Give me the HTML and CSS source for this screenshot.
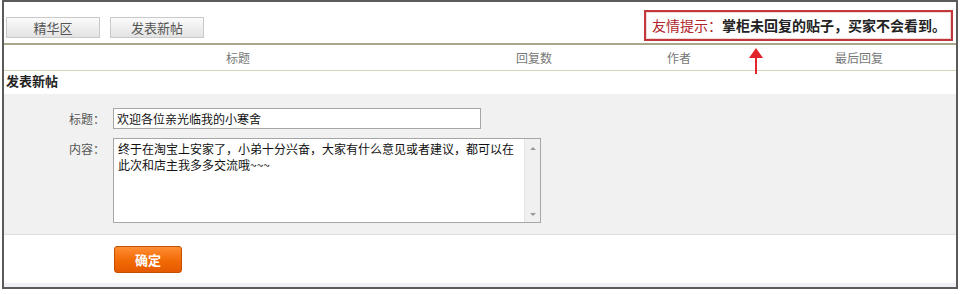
FILE: index.html
```html
<!DOCTYPE html>
<html>
<head>
    <meta charset="utf-8">
    <title>发表新帖</title>
    <link rel="stylesheet" href="styles.css">
</head>
<body>
    <div class="frame">
        <div class="toolbar">
            <button class="tab-btn" type="button">精华区</button>
            <button class="tab-btn" type="button">发表新帖</button>
            <div class="tip"><span class="tip-label">友情提示：</span><b>掌柜未回复的贴子，买家不会看到。</b></div>
        </div>
        <div class="thead">
            <span>标题</span>
            <span>回复数</span>
            <span>作者</span>
            <span>最后回复</span>
        </div>
        <h2 class="section-title">发表新帖</h2>
        <form class="post-form" id="postForm">
            <div class="row">
                <label for="title">标题：</label>
                <input type="text" id="title" class="txt" value="欢迎各位亲光临我的小寒舍">
            </div>
            <div class="row">
                <label for="content">内容：</label>
                <div class="area-box">
                    <textarea id="content" class="area">终于在淘宝上安家了，小弟十分兴奋，大家有什么意见或者建议，都可以在此次和店主我多多交流哦~~~</textarea>
                    <div class="fake-scroll">
                        <span class="arr up"></span>
                        <span class="arr down"></span>
                    </div>
                </div>
            </div>
        </form>
        <div class="actions">
            <button class="submit-btn" type="submit" form="postForm">确定</button>
        </div>
        <div class="strip"></div>

        <!-- flecha roja que apunta al aviso -->
        <svg class="arrow" width="16" height="28" viewBox="0 0 16 28">
            <path d="M8 1 L15 11 L1 11 Z" fill="#e2242b"/>
            <rect x="7" y="10" width="2" height="17" fill="#e2242b"/>
        </svg>
    </div>
</body>
</html>
```

FILE: styles.css
```css
body {
    margin: 0;
    font-family: "Noto Sans CJK SC", "Liberation Sans", sans-serif;
    font-size: 12px;
    color: #333;
    background: #fff;
}
.frame {
    position: relative;
    margin: 0 3px 0 2px;
    border: 2px solid #5b5b5b;
    background: #fff;
}
.toolbar {
    display: flex;
    align-items: flex-end;
    height: 41px;
    padding: 0 2px;
    border-bottom: 2px solid #aaa68a;
}
.tab-btn {
    width: 94px;
    height: 21px;
    margin: 0 10px 5px 0;
    padding: 0;
    border: 1px solid #c9c9c9;
    background: linear-gradient(#fbfbfb, #e3e3e3);
    font-family: inherit;
    font-size: 13px;
    color: #555;
    line-height: 19px;
}
.tip {
    margin: 0 1px 2px auto;
    height: 27px;
    padding: 0 5px 0 6px;
    border: 2px solid #c0383a;
    box-shadow: inset 0 0 0 1px #f3d6d6;
    font-size: 14px;
    line-height: 27px;
    color: #222;
    white-space: nowrap;
}
.tip-label {
    color: #b0262c;
}
.thead {
    display: grid;
    grid-template-columns: 468px 124px 166px 1fr;
    height: 25px;
    line-height: 25px;
    border-bottom: 1px solid #d7d4bd;
    text-align: center;
    color: #777;
}
.section-title {
    margin: 0;
    padding: 0 2px;
    height: 23px;
    line-height: 19px;
    font-size: 13px;
    font-weight: bold;
    color: #222;
}
.post-form {
    padding: 14px 0 11px;
    background: #f1f1f1;
    border-bottom: 1px solid #dedede;
}
.row {
    display: flex;
    align-items: flex-start;
    margin-bottom: 9px;
}
.row:last-child {
    margin-bottom: 0;
}
.row label {
    width: 101px;
    padding-right: 8px;
    text-align: right;
    line-height: 21px;
    color: #555;
}
.txt {
    width: 368px;
    height: 21px;
    box-sizing: border-box;
    margin: 0;
    padding: 0 3px;
    border: 1px solid #a6a6a6;
    background: #fff;
    font-family: inherit;
    font-size: 12px;
    color: #111;
}
.area-box {
    display: flex;
    width: 428px;
    height: 85px;
    box-sizing: border-box;
    border: 1px solid #a6a6a6;
    background: #fff;
}
.area {
    flex: 1;
    margin: 0;
    padding: 2px 4px;
    border: none;
    resize: none;
    overflow: hidden;
    font-family: inherit;
    font-size: 12px;
    line-height: 16px;
    color: #111;
    outline: none;
}
.fake-scroll {
    display: flex;
    flex-direction: column;
    justify-content: space-between;
    align-items: center;
    width: 16px;
    padding: 8px 0 6px;
    box-sizing: border-box;
    background: #f0f0f0;
    border-left: 1px solid #e4e4e4;
}
.arr {
    width: 0;
    height: 0;
    border-left: 3px solid transparent;
    border-right: 3px solid transparent;
}
.arr.up {
    border-bottom: 3px solid #999;
}
.arr.down {
    border-top: 3px solid #999;
}
.actions {
    height: 48px;
    padding-left: 110px;
    display: flex;
    align-items: center;
}
.submit-btn {
    width: 68px;
    height: 27px;
    margin-top: 1px;
    padding: 0;
    border: 1px solid #c25000;
    border-radius: 3px;
    background: linear-gradient(#ff8d34, #f26a06 55%, #e45a00);
    color: #fff;
    font-family: inherit;
    font-size: 13px;
    font-weight: bold;
    cursor: pointer;
}
.strip {
    height: 4px;
    background: #edf1f6;
}
.arrow {
    position: absolute;
    left: 744px;
    top: 45px;
}
```
